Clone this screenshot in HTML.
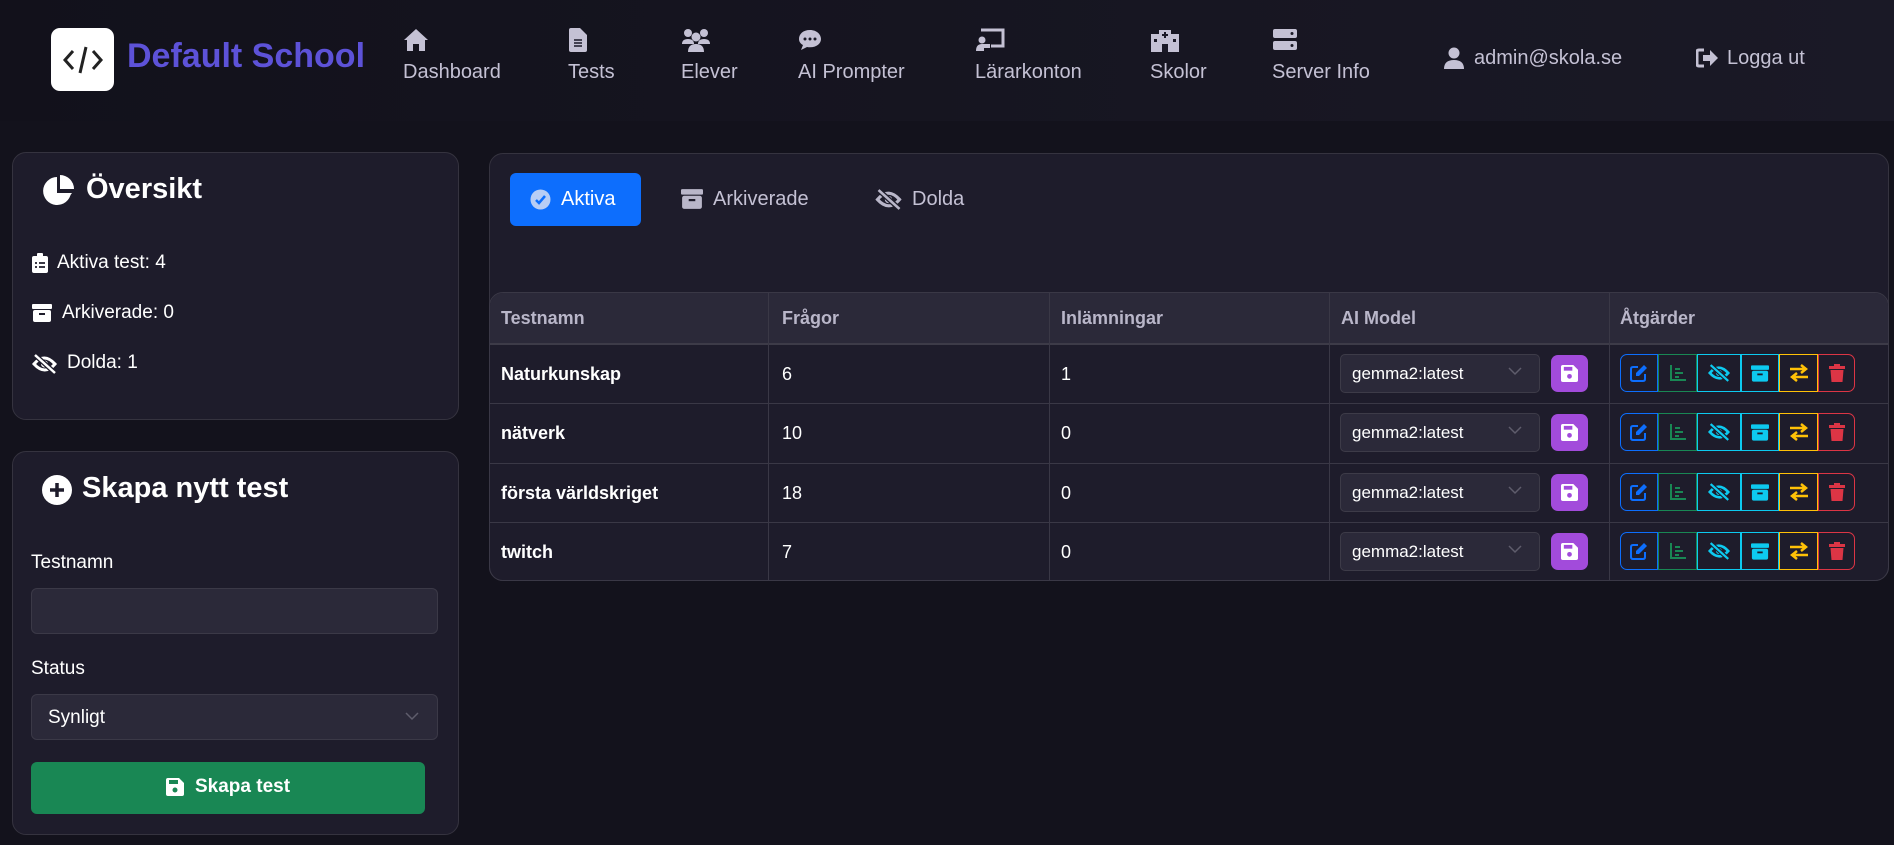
<!DOCTYPE html>
<html><head><meta charset="utf-8"><style>
*{box-sizing:border-box;margin:0;padding:0}
body{width:1894px;height:845px;background:#13121c;font-family:"Liberation Sans",sans-serif;color:#fff;position:relative;overflow:hidden}
.a{position:absolute}
.nav{left:0;top:0;width:1894px;height:121px;background:linear-gradient(90deg,#12111b,#1a1926)}
.ni{position:absolute;top:28px;color:#c4c1d4;font-size:20px;text-align:left}
.ni svg{display:block;margin-bottom:9px}
.card{position:absolute;background:#1e1c2b;border:1px solid #35333f;border-radius:14px}
.lbl{font-size:19px;color:#fff}
.inp{position:absolute;background:#2b2939;border:1px solid #3b3947;border-radius:6px}
.th{position:absolute;font-size:18px;font-weight:bold;color:#b9b6c9}
.td{position:absolute;font-size:18px;color:#fff}
.sel{position:absolute;width:200px;height:39px;background:#2b2939;border:1px solid #3d3b48;border-radius:5px;font-size:17px;padding:9px 11px;color:#fff}
.sv{position:absolute;width:37px;height:37px;background:#a24bdb;border-radius:7px}
.grp{position:absolute;height:38px;display:flex}
.grp div{height:38px;border:1px solid;display:flex;align-items:center;justify-content:center}
</style></head><body>
<div class="a nav"></div>
<div class="a" style="left:51px;top:28px;width:63px;height:63px;background:#fff;border-radius:9px"></div>
<svg class="a" style="left:62px;top:44px" width="42" height="32" viewBox="0 0 42 32"><path d="M11 7L3 16l8 9M31 7l8 9-8 9M24 3l-6 26" stroke="#222" stroke-width="3" fill="none"/></svg>
<div class="a" style="left:127px;top:37px;font-size:34px;font-weight:bold;color:#5d52d8">Default School</div>

<div class="ni" style="left:403px"><svg width="26" height="24" viewBox="0 0 26 24"><path d="M13 1L1 12h3v11h6v-7h6v7h6V12h3z" fill="#c4c1d4"/></svg>Dashboard</div>
<div class="ni" style="left:568px"><svg width="18" height="24" style="margin-left:1px" viewBox="0 0 18 24"><path d="M0 2q0-2 2-2h9l7 7v15q0 2-2 2H2q-2 0-2-2z" fill="#c4c1d4"/><path d="M5 12h8M5 15h8M5 18h8" stroke="#1a1926" stroke-width="1.6"/></svg>Tests</div>
<div class="ni" style="left:681px"><svg width="30" height="24" viewBox="0 0 30 24"><circle cx="7" cy="5" r="4" fill="#c4c1d4"/><circle cx="23" cy="5" r="4" fill="#c4c1d4"/><circle cx="15" cy="9" r="4.5" fill="#c4c1d4"/><path d="M1 16q0-5 6-5t6 5zM17 16q0-5 6-5t6 5zM7 24q0-8 8-8t8 8z" fill="#c4c1d4"/></svg>Elever</div>
<div class="ni" style="left:798px"><svg width="24" height="24" viewBox="0 0 24 24"><path d="M12 2C5 2 1 6 1 11c0 3 2 5 4 6l-2 5 6-3q1.5.3 3 .3c7 0 11-4 11-8.3S19 2 12 2z" fill="#c4c1d4"/><circle cx="7" cy="11" r="1.5" fill="#1a1926"/><circle cx="12" cy="11" r="1.5" fill="#1a1926"/><circle cx="17" cy="11" r="1.5" fill="#1a1926"/></svg>AI Prompter</div>
<div class="ni" style="left:975px"><svg width="30" height="24" viewBox="0 0 30 24"><path d="M6 2h22v16H16" stroke="#c4c1d4" stroke-width="3" fill="none"/><circle cx="7" cy="12" r="3.5" fill="#c4c1d4"/><path d="M1 23q0-7 6-7h8v4H9v3z" fill="#c4c1d4"/></svg>Lärarkonton</div>
<div class="ni" style="left:1150px"><svg width="30" height="24" viewBox="0 0 30 24"><path d="M1 6h8V2h12v4h8v18H1z" fill="#c4c1d4"/><path d="M15 4v6M12 7h6" stroke="#1a1926" stroke-width="2"/><rect x="4" y="11" width="3" height="3" fill="#1a1926"/><rect x="23" y="11" width="3" height="3" fill="#1a1926"/><rect x="12" y="16" width="6" height="8" fill="#1a1926"/></svg>Skolor</div>
<div class="ni" style="left:1272px"><svg width="26" height="24" viewBox="0 0 26 24"><rect x="1" y="1" width="24" height="9" rx="2" fill="#c4c1d4"/><rect x="1" y="13" width="24" height="9" rx="2" fill="#c4c1d4"/><circle cx="20" cy="5.5" r="1.5" fill="#1a1926"/><circle cx="20" cy="17.5" r="1.5" fill="#1a1926"/></svg>Server Info</div>
<svg class="a" style="left:1444px;top:47px" width="20" height="22" viewBox="0 0 20 22"><circle cx="10" cy="6" r="5.5" fill="#c4c1d4"/><path d="M0 22q0-9 10-9t10 9z" fill="#c4c1d4"/></svg>
<div class="a" style="left:1474px;top:47px;font-size:20px;color:#c4c1d4">admin@skola.se</div>
<svg class="a" style="left:1696px;top:48px" width="22" height="20" viewBox="0 0 22 20"><path d="M8 2H3q-2 0-2 2v12q0 2 2 2h5" stroke="#c4c1d4" stroke-width="3" fill="none"/><path d="M7 7h7V2l8 8-8 8v-5H7z" fill="#c4c1d4"/></svg>
<div class="a" style="left:1727px;top:47px;font-size:20px;color:#c4c1d4">Logga ut</div>

<div class="card" style="left:12px;top:152px;width:447px;height:268px"></div>
<svg class="a" style="left:43px;top:175px" width="33" height="31" viewBox="0 0 33 31"><path d="M14 2A14 14 0 1 0 28 18H14z" fill="#fff"/><path d="M17 0a14 14 0 0 1 14 14H17z" fill="#fff"/><path d="M18 18h11l-7 9z" fill="#fff"/></svg>
<div class="a" style="left:86px;top:173px;font-size:29px;font-weight:bold">Översikt</div>
<svg class="a" style="left:32px;top:253px" width="16" height="20" viewBox="0 0 16 20"><rect x="0" y="3" width="16" height="17" rx="2" fill="#fff"/><rect x="5" y="0" width="6" height="5" rx="1" fill="#fff"/><path d="M3 10h2M7 10h6M3 14h2M7 14h6" stroke="#1e1c2b" stroke-width="1.8"/></svg>
<div class="a lbl" style="left:57px;top:252px">Aktiva test: 4</div>
<svg class="a" style="left:32px;top:304px" width="20" height="18" viewBox="0 0 20 18"><rect x="0" y="0" width="20" height="5" rx="1" fill="#fff"/><rect x="1" y="6" width="18" height="12" rx="2" fill="#fff"/><path d="M7 10h6" stroke="#1e1c2b" stroke-width="2"/></svg>
<div class="a lbl" style="left:62px;top:302px">Arkiverade: 0</div>
<svg class="a" style="left:32px;top:354px" width="25" height="20" viewBox="0 0 25 20"><path d="M2 10q10-12 21 0-10 12-21 0z" stroke="#fff" stroke-width="3" fill="none"/><circle cx="12.5" cy="10" r="3.5" fill="#fff"/><path d="M3 1l20 18" stroke="#1e1c2b" stroke-width="5"/><path d="M3 1l20 18" stroke="#fff" stroke-width="2.5"/></svg>
<div class="a lbl" style="left:67px;top:352px">Dolda: 1</div>

<div class="card" style="left:12px;top:451px;width:447px;height:384px"></div>
<svg class="a" style="left:42px;top:475px" width="30" height="30" viewBox="0 0 30 30"><circle cx="15" cy="15" r="15" fill="#fff"/><path d="M15 8v14M8 15h14" stroke="#1e1c2b" stroke-width="3.5"/></svg>
<div class="a" style="left:82px;top:472px;font-size:29px;font-weight:bold">Skapa nytt test</div>
<div class="a lbl" style="left:31px;top:552px">Testnamn</div>
<div class="inp" style="left:31px;top:588px;width:407px;height:46px"></div>
<div class="a lbl" style="left:31px;top:658px">Status</div>
<div class="inp" style="left:31px;top:694px;width:407px;height:46px"></div>
<div class="a" style="left:48px;top:707px;font-size:19px">Synligt</div>
<svg class="a" style="left:405px;top:712px" width="14" height="9"><path d="M1 1l6 6 6-6" stroke="#5f5d6c" stroke-width="1.5" fill="none"/></svg>
<div class="a" style="left:31px;top:762px;width:394px;height:52px;background:#198754;border-radius:6px"></div>
<svg class="a" style="left:166px;top:778px" width="18" height="18" viewBox="0 0 18 18"><path d="M0 2q0-2 2-2h11l5 5v11q0 2-2 2H2q-2 0-2-2z" fill="#fff"/><rect x="3" y="2" width="9" height="4" fill="#198754"/><circle cx="9" cy="12" r="2.5" fill="#198754"/></svg>
<div class="a" style="left:195px;top:776px;font-size:19px;font-weight:bold">Skapa test</div>

<div class="card" style="left:489px;top:153px;width:1400px;height:428px"></div>
<div class="a" style="left:510px;top:173px;width:131px;height:53px;background:#0d6efd;border-radius:6px"></div>
<svg class="a" style="left:530px;top:189px" width="21" height="21"><circle cx="10.5" cy="10.5" r="10" fill="#b7cdf5"/><path d="M6 11l3 3 6-7" stroke="#0d6efd" stroke-width="2.5" fill="none"/></svg>
<div class="a" style="left:561px;top:188px;font-size:20px;color:#fff">Aktiva</div>
<svg class="a" style="left:681px;top:189px" width="22" height="20" viewBox="0 0 20 18"><rect x="0" y="0" width="20" height="5" rx="1" fill="#b9b6c9"/><rect x="1" y="6" width="18" height="12" rx="2" fill="#b9b6c9"/><path d="M7 10h6" stroke="#1e1c2b" stroke-width="2"/></svg>
<div class="a" style="left:713px;top:188px;font-size:20px;color:#c4c1d4">Arkiverade</div>
<svg class="a" style="left:875px;top:189px" width="27" height="21" viewBox="0 0 25 20"><path d="M2 10q10-12 21 0-10 12-21 0z" stroke="#b9b6c9" stroke-width="3" fill="none"/><circle cx="12.5" cy="10" r="3.5" fill="#b9b6c9"/><path d="M3 1l20 18" stroke="#1e1c2b" stroke-width="5"/><path d="M3 1l20 18" stroke="#b9b6c9" stroke-width="2.5"/></svg>
<div class="a" style="left:912px;top:188px;font-size:20px;color:#c4c1d4">Dolda</div>

<div class="a" style="left:489px;top:292px;width:1400px;height:289px;border:1px solid #3a3846;border-radius:14px;overflow:hidden">
 <div style="height:52px;background:#2b2939;border-bottom:2px solid #3d3b48"></div>
 <div style="height:59px;border-bottom:1px solid #3a3846"></div>
 <div style="height:60px;border-bottom:1px solid #3a3846"></div>
 <div style="height:59px;border-bottom:1px solid #3a3846"></div>
</div>
<div class="a" style="left:768px;top:292px;width:1px;height:289px;background:#3a3846"></div>
<div class="a" style="left:1049px;top:292px;width:1px;height:289px;background:#3a3846"></div>
<div class="a" style="left:1329px;top:292px;width:1px;height:289px;background:#3a3846"></div>
<div class="a" style="left:1609px;top:292px;width:1px;height:289px;background:#3a3846"></div>
<div class="th" style="left:501px;top:308px">Testnamn</div>
<div class="th" style="left:782px;top:308px">Frågor</div>
<div class="th" style="left:1061px;top:308px">Inlämningar</div>
<div class="th" style="left:1341px;top:308px">AI Model</div>
<div class="th" style="left:1620px;top:308px">Åtgärder</div>

<div id="rows"></div>
<script>
var rows=[["Naturkunskap","6","1"],["nätverk","10","0"],["första världskriget","18","0"],["twitch","7","0"]];
var ys=[364,423,483,542],h="";
var cols=["#0d6efd","#198754","#0dcaf0","#0dcaf0","#ffc107","#dc3545"],ws=[38,39,44,38,39,37];
var ic=[
'<svg width="18" height="18" viewBox="0 0 18 18"><path d="M8 3H3q-2 0-2 2v10q0 2 2 2h10q2 0 2-2v-5" stroke="#0d6efd" stroke-width="2" fill="none"/><path d="M14 1l3 3-8 8H6V9z" fill="#0d6efd"/></svg>',
'<svg width="18" height="18" viewBox="0 0 18 18"><path d="M2 1v15h15" stroke="#198754" stroke-width="2" fill="none"/><path d="M6 5h5M6 9h8M6 13h4" stroke="#198754" stroke-width="2"/></svg>',
'<svg width="22" height="18" viewBox="0 0 25 20"><path d="M2 10q10-12 21 0-10 12-21 0z" stroke="#0dcaf0" stroke-width="3" fill="none"/><circle cx="12.5" cy="10" r="3.5" fill="#0dcaf0"/><path d="M3 1l20 18" stroke="#1e1c2b" stroke-width="5"/><path d="M3 1l20 18" stroke="#0dcaf0" stroke-width="2.5"/></svg>',
'<svg width="18" height="17" viewBox="0 0 20 18"><rect x="0" y="0" width="20" height="5" rx="1" fill="#0dcaf0"/><rect x="1" y="6" width="18" height="12" rx="2" fill="#0dcaf0"/><path d="M7 10h6" stroke="#1e1c2b" stroke-width="2"/></svg>',
'<svg width="20" height="18" viewBox="0 0 20 18"><path d="M1 5h15M12 1l5 4-5 4M19 13H4M8 9l-5 4 5 4" stroke="#ffc107" stroke-width="2.5" fill="none"/></svg>',
'<svg width="16" height="18" viewBox="0 0 16 18"><rect x="0" y="2" width="16" height="3" fill="#dc3545"/><rect x="5" y="0" width="6" height="3" fill="#dc3545"/><path d="M1.5 6h13l-1 12h-11z" fill="#dc3545"/></svg>'];
for(var i=0;i<4;i++){var y=ys[i];
h+='<div class="td" style="left:501px;top:'+y+'px;font-weight:bold">'+rows[i][0]+'</div>';
h+='<div class="td" style="left:782px;top:'+y+'px">'+rows[i][1]+'</div>';
h+='<div class="td" style="left:1061px;top:'+y+'px">'+rows[i][2]+'</div>';
h+='<div class="sel" style="left:1340px;top:'+(y-10)+'px">gemma2:latest</div>';
h+='<svg class="a" style="left:1508px;top:'+(y+3)+'px" width="14" height="9"><path d="M1 1l6 6 6-6" stroke="#5f5d6c" stroke-width="1.5" fill="none"/></svg>';
h+='<div class="sv" style="left:1551px;top:'+(y-9)+'px"><svg style="margin:10px" width="17" height="17" viewBox="0 0 18 18"><path d="M0 2q0-2 2-2h11l5 5v11q0 2-2 2H2q-2 0-2-2z" fill="#fff"/><rect x="3" y="2" width="9" height="4" fill="#a24bdb"/><circle cx="9" cy="12" r="2.5" fill="#a24bdb"/></svg></div>';
h+='<div class="grp" style="left:1620px;top:'+(y-10)+'px">';
for(var j=0;j<6;j++){var r=j==0?'border-radius:7px 0 0 7px;':(j==5?'border-radius:0 7px 7px 0;':'');
h+='<div style="width:'+ws[j]+'px;border-color:'+cols[j]+';'+r+'">'+ic[j]+'</div>';}
h+='</div>';}
document.getElementById('rows').innerHTML=h;
</script>
</body></html>
